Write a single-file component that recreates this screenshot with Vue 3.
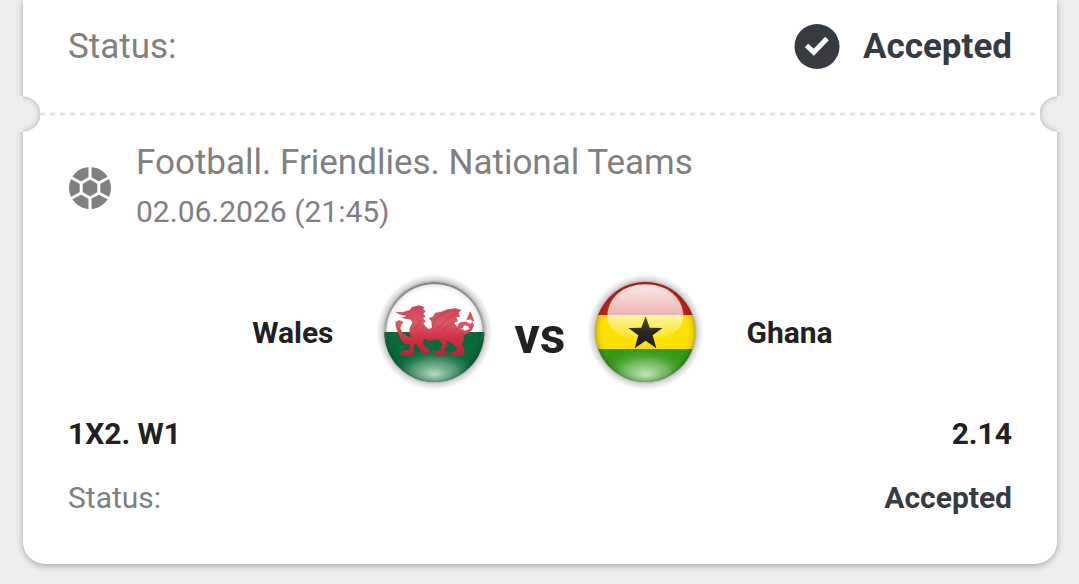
<script setup>
const event = {
  title: 'Football. Friendlies. National Teams',
  date: '02.06.2026 (21:45)',
  home: 'Wales',
  away: 'Ghana',
  market: '1X2. W1',
  odds: '2.14',
  status: 'Accepted',
}
</script>

<template>
  <main class="page">
    <article class="ticket">
      <section class="summary">
        <span class="label">Status:</span>
        <span class="state">
          <svg class="check" viewBox="0 0 46 46" aria-hidden="true">
            <circle cx="23" cy="22.5" r="22.5" fill="#363a41" />
            <path d="M12.5 21.5 19.8 28.2 33 14.5" fill="none" stroke="#fff" stroke-width="5" />
          </svg>
          <strong>{{ event.status }}</strong>
        </span>
      </section>

      <div class="tear">
        <i class="notch left"></i>
        <svg class="dashes" aria-hidden="true">
          <line x1="0" y1="2" x2="100%" y2="2" stroke="#e2e2e2" stroke-width="3" stroke-dasharray="5 5" />
        </svg>
        <i class="notch right"></i>
      </div>

      <section class="details">
        <header class="event">
          <svg class="ball" viewBox="0 0 42 42" aria-hidden="true">
            <circle cx="21" cy="21" r="21" fill="#808080" />
            <g fill="none" stroke="#fff" stroke-width="3">
              <path d="M21 11 29.8 16V26L21 31 12.2 26V16Z" />
              <path d="M21 0V11M21 31V42M29.8 16 40 10.5M29.8 26 40 31.5M12.2 26 2 31.5M12.2 16 2 10.5" />
            </g>
          </svg>
          <div>
            <h1>{{ event.title }}</h1>
            <time datetime="2026-06-02T21:45">{{ event.date }}</time>
          </div>
        </header>

        <div class="match">
          <span class="team home">{{ event.home }}</span>
          <svg class="flag" viewBox="15 7 360 360" role="img" aria-label="Flag of Wales">
            <defs>
              <clipPath id="walesClip"><circle cx="193" cy="187" r="150" /></clipPath>
              <linearGradient id="dragon" x1="0" y1="0" x2="0" y2="1">
                <stop offset="0" stop-color="#cf4454" />
                <stop offset=".35" stop-color="#d65966" />
                <stop offset=".7" stop-color="#cf2a3f" />
                <stop offset="1" stop-color="#c0203a" />
              </linearGradient>
              <radialGradient id="walesGlow">
                <stop offset="0" stop-color="#b5dcc3" />
                <stop offset=".5" stop-color="#6fae88" stop-opacity=".7" />
                <stop offset="1" stop-color="#08743b" stop-opacity="0" />
              </radialGradient>
              <linearGradient id="walesRim" x1="0" y1="0" x2="0" y2="1">
                <stop offset="0" stop-color="#888" stop-opacity=".8" />
                <stop offset=".5" stop-color="#888" stop-opacity=".4" />
                <stop offset=".7" stop-color="#064" stop-opacity="0" />
              </linearGradient>
              <radialGradient id="rim">
                <stop offset=".86" stop-color="#000" stop-opacity="0" />
                <stop offset=".95" stop-color="#000" stop-opacity=".08" />
                <stop offset="1" stop-color="#000" stop-opacity=".22" />
              </radialGradient>
              <radialGradient id="halo">
                <stop offset=".85" stop-color="#000" stop-opacity=".34" />
                <stop offset=".9" stop-color="#000" stop-opacity=".15" />
                <stop offset="1" stop-color="#000" stop-opacity="0" />
              </radialGradient>
            </defs>
            <circle cx="193" cy="187" r="174" fill="url(#halo)" />
            <g clip-path="url(#walesClip)">
              <path fill="#fff" d="M40 30H350V187H40Z" />
              <path fill="#08693a" d="M40 187H350V340H40Z" />
              <ellipse cx="193" cy="314" rx="140" ry="80" fill="url(#walesGlow)" />
              <path fill="url(#dragon)" d="M75 126 97 128 119 121 125 113 147 107 162 112 160 120 167 124 160 132 167 141 159 145 168 156 160 159 166 170 176 178 186 174 184 155 176 145 188 141 196 129 211 127 233 119 256 116 274 121 266 129 270 141 259 143 264 155 253 159 259 169 274 178 286 183 299 177 294 169 282 167 278 175 266 178 262 167 272 157 289 156 301 163 307 157 302 149 289 152 301 124 313 155 306 154 312 167 306 181 293 192 281 197 282 212 275 222 282 235 284 254 272 260 245 257 239 249 259 244 260 235 245 220 228 212 234 228 222 239 231 249 225 257 203 260 190 253 196 244 213 244 211 234 218 224 205 210 177 213 163 207 158 222 171 233 181 244 174 252 155 250 146 232 135 221 131 238 134 252 122 259 96 258 88 251 101 243 117 240 119 224 101 222 91 205 84 190 77 169 76 157 88 151 101 158 95 164 91 175 96 187 109 198 125 203 118 190 119 175 127 159 122 150 94 145 109 139 88 134Z" />
              <path d="M186 174 198 146 233 124M201 178 232 146 264 130M214 183 250 158M129 178 145 169 150 151M158 218 188 206 228 211" fill="none" stroke="#b51f38" stroke-width="3" opacity=".45" />
              <circle cx="193" cy="187" r="147" fill="none" stroke="url(#walesRim)" stroke-width="7" />
            </g>
            <circle cx="193" cy="187" r="150" fill="url(#rim)" />
          </svg>
          <span class="versus">vs</span>
          <svg class="flag" viewBox="17 7 360 360" role="img" aria-label="Flag of Ghana">
            <defs>
              <clipPath id="ghanaClip"><circle cx="195" cy="187" r="150" /></clipPath>
              <linearGradient id="gloss" x1="0" y1="0" x2="0" y2="1">
                <stop offset="0" stop-color="#fff" stop-opacity=".92" />
                <stop offset=".55" stop-color="#fff" stop-opacity=".66" />
                <stop offset="1" stop-color="#fff" stop-opacity=".08" />
              </linearGradient>
              <linearGradient id="star" x1="0" y1="0" x2="0" y2="1">
                <stop offset="0" stop-color="#57523c" />
                <stop offset=".5" stop-color="#292724" />
                <stop offset="1" stop-color="#24201c" />
              </linearGradient>
              <radialGradient id="ghanaGlow">
                <stop offset="0" stop-color="#c4e8bc" />
                <stop offset=".5" stop-color="#83c36f" stop-opacity=".75" />
                <stop offset="1" stop-color="#329516" stop-opacity="0" />
              </radialGradient>
            </defs>
            <circle cx="195" cy="187" r="174" fill="url(#halo)" />
            <g clip-path="url(#ghanaClip)">
              <path fill="#c1241a" d="M40 30H350V136H40Z" />
              <path fill="#ffe000" d="M40 136H350V238H40Z" />
              <path fill="#359a1a" d="M40 238H350V340H40Z" />
              <ellipse cx="195" cy="314" rx="140" ry="80" fill="url(#ghanaGlow)" />
              <path fill="url(#gloss)" d="M81 142C81 85 127 44 195 44S309 85 309 142C309 180 266 209 195 209S81 180 81 142Z" />
              <path fill="url(#star)" d="M196 140 208 174 247 175 217 197 228 236 196 213 163 236 174 197 144 175 183 174Z" />
            </g>
            <circle cx="195" cy="187" r="150" fill="url(#rim)" />
          </svg>
          <span class="team away">{{ event.away }}</span>
        </div>

        <div class="row bet">
          <strong>{{ event.market }}</strong>
          <strong>{{ event.odds }}</strong>
        </div>
        <div class="row">
          <span class="label">Status:</span>
          <strong class="accepted">{{ event.status }}</strong>
        </div>
      </section>
    </article>
  </main>
</template>

<style>
body {
  margin: 0;
  background: #eee;
}
</style>

<style scoped>
.page {
  padding: 0 22px 20px 23px;
  overflow: hidden;
  font-family: Roboto, "Liberation Sans", sans-serif;
  color: #212121;
}
.ticket {
  background: #fff;
  border-radius: 0 0 22px 22px;
  box-shadow: 0 2px 6px rgba(0, 0, 0, 0.3);
}
.summary {
  display: flex;
  justify-content: space-between;
  align-items: center;
  height: 96px;
  padding: 0 45px 2px;
  box-sizing: border-box;
  font-size: 35px;
  line-height: 44px;
}
.label {
  color: #808080;
}
.state {
  display: flex;
  align-items: center;
  gap: 23px;
  color: #363a41;
}
strong {
  font-weight: 700;
}
.check {
  width: 46px;
  height: 46px;
}
.tear {
  display: flex;
  align-items: center;
  justify-content: space-between;
  height: 36px;
  margin: 0 -8px;
}
.notch {
  width: 25px;
  height: 36px;
}
.notch.left {
  background:
    linear-gradient(to right, #eee 8px, transparent 8px),
    radial-gradient(circle at 8px 18px, #eee 11px, #e6e6e6 14px, #cfcfcf 17px, transparent 18px);
}
.notch.right {
  background:
    linear-gradient(to left, #eee 8px, transparent 8px),
    radial-gradient(circle at 17px 18px, #eee 11px, #e6e6e6 14px, #cfcfcf 17px, transparent 18px);
}
.dashes {
  flex: 1;
  min-width: 0;
  height: 4px;
}
.details {
  padding: 8px 45px 46px;
}
.event {
  display: flex;
  align-items: center;
  gap: 25px;
}
.ball {
  width: 42px;
  height: 42px;
  margin: 4px 0 0 1px;
}
h1 {
  margin: 0;
  color: #808080;
  font-size: 35px;
  font-weight: 400;
  line-height: 46px;
}
time {
  display: block;
  margin-top: 6px;
  color: #808080;
  font-size: 30px;
  line-height: 40px;
}
.match {
  display: flex;
  align-items: center;
  margin-top: 40px;
}
.team {
  flex: 1;
  padding-top: 2px;
  font-size: 30px;
  font-weight: 700;
  line-height: 40px;
}
.home {
  padding-right: 41px;
  text-align: right;
}
.away {
  padding-left: 41px;
}
.flag {
  width: 120px;
  height: 120px;
}
.versus {
  width: 91px;
  padding-top: 8px;
  text-align: center;
  font-size: 50px;
  font-weight: 700;
  line-height: 60px;
}
.row {
  display: flex;
  justify-content: space-between;
  margin-top: 24px;
  font-size: 30px;
  line-height: 40px;
}
.row.bet {
  margin-top: 22px;
}
.accepted {
  color: #363a41;
}
</style>
